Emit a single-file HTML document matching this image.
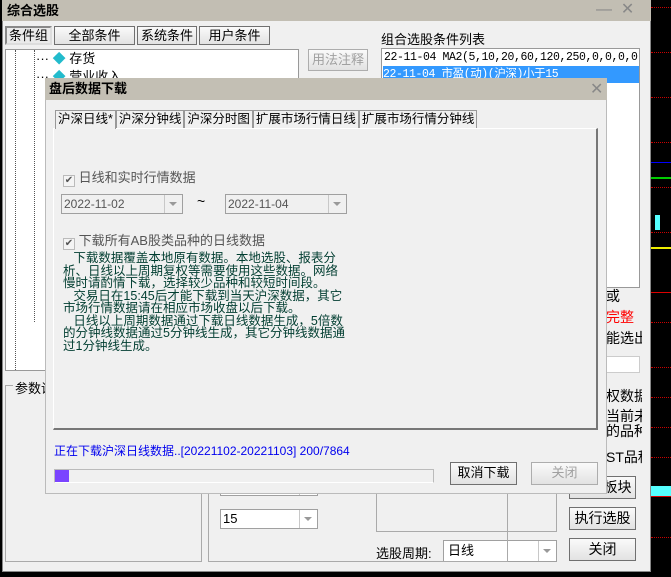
<!DOCTYPE html>
<html><head><meta charset="utf-8"><style>
*{box-sizing:border-box;margin:0;padding:0}
body{width:671px;height:577px;background:#000;position:relative;overflow:hidden;font-family:"Liberation Sans","Noto Sans CJK SC",sans-serif;font-size:12px;color:#000}
.a{position:absolute}
.btn{position:absolute;background:linear-gradient(#fafafa,#e2e2e2);border:1px solid #707070;text-align:center;font-size:13px;line-height:20px;overflow:hidden;white-space:nowrap}
.dis{color:#a0a0a0;border-color:#adadad}
.combo{position:absolute;background:#fff;border:1px solid #a0a0a0;font-size:12px;padding-left:2px}
.combo:after{content:"";position:absolute;right:0;top:0;bottom:0;width:17px;border-left:1px solid #c8c8c8}
.arr{position:absolute;right:5px;top:50%;margin-top:-2px;border-left:4px solid transparent;border-right:4px solid transparent;border-top:4px solid #999}
.dot{position:absolute;border-top:1px dotted #c00;width:20px;right:0}
.tab{display:inline-block;border:1px solid #999;border-bottom:none;padding:0 2px}
.r{position:absolute;left:606px;width:36px;overflow:hidden;white-space:nowrap;font-size:14px;line-height:16px}
</style></head><body>
<div class="dot" style="top:7px"></div><div class="dot" style="top:52px"></div><div class="dot" style="top:97px"></div><div class="dot" style="top:142px"></div><div class="dot" style="top:187px"></div><div class="dot" style="top:232px"></div><div class="dot" style="top:322px"></div><div class="dot" style="top:367px"></div><div class="dot" style="top:397px"></div><div class="dot" style="top:427px"></div><div class="dot" style="top:457px"></div><div class="dot" style="top:537px"></div>
<div class="a" style="left:651px;top:162px;width:20px;height:1px;background:#00f"></div>
<div class="a" style="left:651px;top:177px;width:20px;height:2px;background:#0c0"></div>
<div class="a" style="left:651px;top:247px;width:20px;height:2px;background:#ee0"></div>
<div class="a" style="left:655px;top:215px;width:5px;height:15px;background:#5ff"></div>
<div class="a" style="left:651px;top:292px;width:20px;height:1px;background:#d00"></div>
<div class="a" style="left:651px;top:486px;width:20px;height:10px;background:#5ff"></div>
<div class="a" style="left:651px;top:496px;width:20px;height:1px;background:#d00"></div>
<div class="a" style="left:2px;top:0;width:649px;height:572px;background:#f0f0f0;border:1px solid #888"></div>
<div class="a" style="left:2px;top:0;width:649px;height:21px;background:#c2beb3;font-weight:bold;font-size:13px;line-height:21px;padding-left:5px">综合选股</div>
<div class="a" style="left:596px;top:0;color:#888;font-size:16px;line-height:20px">—&nbsp;&nbsp;✕</div>
<div class="btn" style="left:5px;top:26px;width:47px;height:19px;background:#eaeaea;border:2px inset #ddd;line-height:15px">条件组</div>
<div class="btn" style="left:54px;top:26px;width:81px;height:19px;line-height:17px">全部条件</div>
<div class="btn" style="left:137px;top:26px;width:60px;height:19px;line-height:17px">系统条件</div>
<div class="btn" style="left:199px;top:26px;width:71px;height:19px;line-height:17px">用户条件</div>
<div class="a" style="left:5px;top:49px;width:294px;height:322px;background:#fff;border:1px solid #999"></div>
<div class="a" style="left:15px;top:50px;height:320px;border-left:1px dotted #555"></div>
<div class="a" style="left:34px;top:50px;height:272px;border-left:1px dotted #555"></div>
<div class="a" style="left:36px;top:50px;font-size:13px;line-height:18px">··· <span style="color:#2bc">◆</span> 存货<br>··· <span style="color:#2bc">◆</span> 营业收入</div>
<div class="btn dis" style="left:308px;top:49px;width:60px;height:22px">用法注释</div>
<div class="a" style="left:381px;top:29px;font-size:13px">组合选股条件列表</div>
<div class="a" style="left:381px;top:48px;width:259px;height:240px;background:#fff;border:1px solid #999;font-family:'Liberation Mono','Noto Sans CJK SC',monospace;font-size:11.5px;letter-spacing:-0.4px;line-height:17px;white-space:nowrap;overflow:hidden;padding-left:2px">22-11-04 MA2(5,10,20,60,120,250,0,0,0,0):比<div style="background:#3399ff;color:#fff;margin-left:-1px">22-11-04 市盈(动)(沪深)小于15</div></div>
<div class="a" style="left:606px;top:286px;width:36px;overflow:hidden;white-space:nowrap;font-size:14px;line-height:21px">或<br><span style="color:red">完整</span><br>能选出</div>
<div class="a" style="left:606px;top:356px;width:34px;height:17px;border:1px solid #ccc;background:#fff"></div>
<div class="r" style="top:388px">权数据</div>
<div class="r" style="top:408px">当前未</div>
<div class="r" style="top:423px">的品种</div>
<div class="r" style="top:449px">ST品种</div>
<div class="btn" style="left:569px;top:476px;width:67px;height:23px;font-size:14px;padding-left:30px">板块</div>
<div class="btn" style="left:569px;top:507px;width:67px;height:23px;font-size:14px">执行选股</div>
<div class="btn" style="left:569px;top:538px;width:67px;height:23px;font-size:14px">关闭</div>
<div class="a" style="left:376px;top:493px;width:181px;height:39px;border:1px solid #aaa"></div>
<div class="a" style="left:376px;top:543px;font-size:13px">选股周期:</div>
<div class="combo" style="left:443px;top:540px;width:114px;height:22px;font-size:13px;line-height:20px;padding-left:4px">日线<span class="arr"></span></div>
<div class="a" style="left:5px;top:385px;width:197px;height:177px;border:1px solid #aaa"></div>
<div class="a" style="left:13px;top:378px;background:#f0f0f0;padding:0 2px;font-size:13px">参数设</div>
<div class="a" style="left:208px;top:385px;width:300px;height:177px;border:1px solid #aaa"></div>
<div class="combo" style="left:220px;top:480px;width:98px;height:16px"><span class="arr"></span></div>
<div class="combo" style="left:220px;top:509px;width:98px;height:20px;font-size:13px;line-height:18px">15<span class="arr"></span></div>
<!-- dialog -->
<div class="a" style="left:45px;top:78px;width:562px;height:416px;background:#f0f0f0;border:1px solid #bbb"></div>
<div class="a" style="left:45px;top:78px;width:562px;height:22px;background:#c3bfb4;font-weight:bold;font-size:13px;line-height:22px;padding-left:4px">盘后数据下载</div>
<div class="a" style="left:590px;top:79px;color:#888;font-size:16px">✕</div>
<div class="a" style="left:53px;top:128px;width:545px;height:302px;border:1px solid #fff;border-right:2px solid #777;border-bottom:2px solid #777"></div>
<div class="a" style="left:55px;top:110px;font-size:12.5px;line-height:17px;white-space:nowrap">
<span class="tab" style="background:#f0f0f0;height:19px">沪深日线*</span><span class="tab">沪深分钟线</span><span class="tab">沪深分时图</span><span class="tab">扩展市场行情日线</span><span class="tab">扩展市场行情分钟线</span></div>
<div class="a" style="left:63px;top:167px;font-size:13px;color:#555"><span style="display:inline-block;width:12px;height:12px;border:1px solid #bbb;background:#f4f4f4;font-size:10px;line-height:10px;text-align:center;vertical-align:-1px">✔</span> 日线和实时行情数据</div>
<div class="combo" style="left:61px;top:194px;width:122px;height:20px;color:#555;background:#f0f0f0;line-height:18px">2022-11-02<span class="arr"></span></div>
<div class="a" style="left:197px;top:193px;font-size:14px">~</div>
<div class="combo" style="left:225px;top:194px;width:122px;height:20px;color:#555;background:#f0f0f0;line-height:18px">2022-11-04<span class="arr"></span></div>
<div class="a" style="left:63px;top:230px;font-size:13px;color:#555"><span style="display:inline-block;width:12px;height:12px;border:1px solid #bbb;background:#f4f4f4;font-size:10px;line-height:10px;text-align:center;vertical-align:-1px">✔</span> 下载所有AB股类品种的日线数据</div>
<div class="a" style="left:63px;top:252px;width:284px;font-size:12.5px;line-height:12.5px;color:#003d30">&nbsp;&nbsp;&nbsp;下载数据覆盖本地原有数据。本地选股、报表分析、日线以上周期复权等需要使用这些数据。网络慢时请酌情下载，选择较少品种和较短时间段。<br>&nbsp;&nbsp;&nbsp;交易日在15:45后才能下载到当天沪深数据，其它市场行情数据请在相应市场收盘以后下载。<br>&nbsp;&nbsp;&nbsp;日线以上周期数据通过下载日线数据生成，5倍数的分钟线数据通过5分钟线生成，其它分钟线数据通过1分钟线生成。</div>
<div class="a" style="left:54px;top:442px;color:#0000ee;font-size:12px;white-space:nowrap">正在下载沪深日线数据..[20221102-20221103] 200/7864</div>
<div class="a" style="left:54px;top:469px;width:380px;height:14px;border:1px solid #bbb;border-bottom-color:#fff;background:#f0f0f0"></div>
<div class="a" style="left:55px;top:470px;width:14px;height:12px;background:#7b44ff"></div>
<div class="btn" style="left:450px;top:462px;width:67px;height:23px">取消下载</div>
<div class="btn dis" style="left:531px;top:462px;width:67px;height:23px">关闭</div>
</body></html>
